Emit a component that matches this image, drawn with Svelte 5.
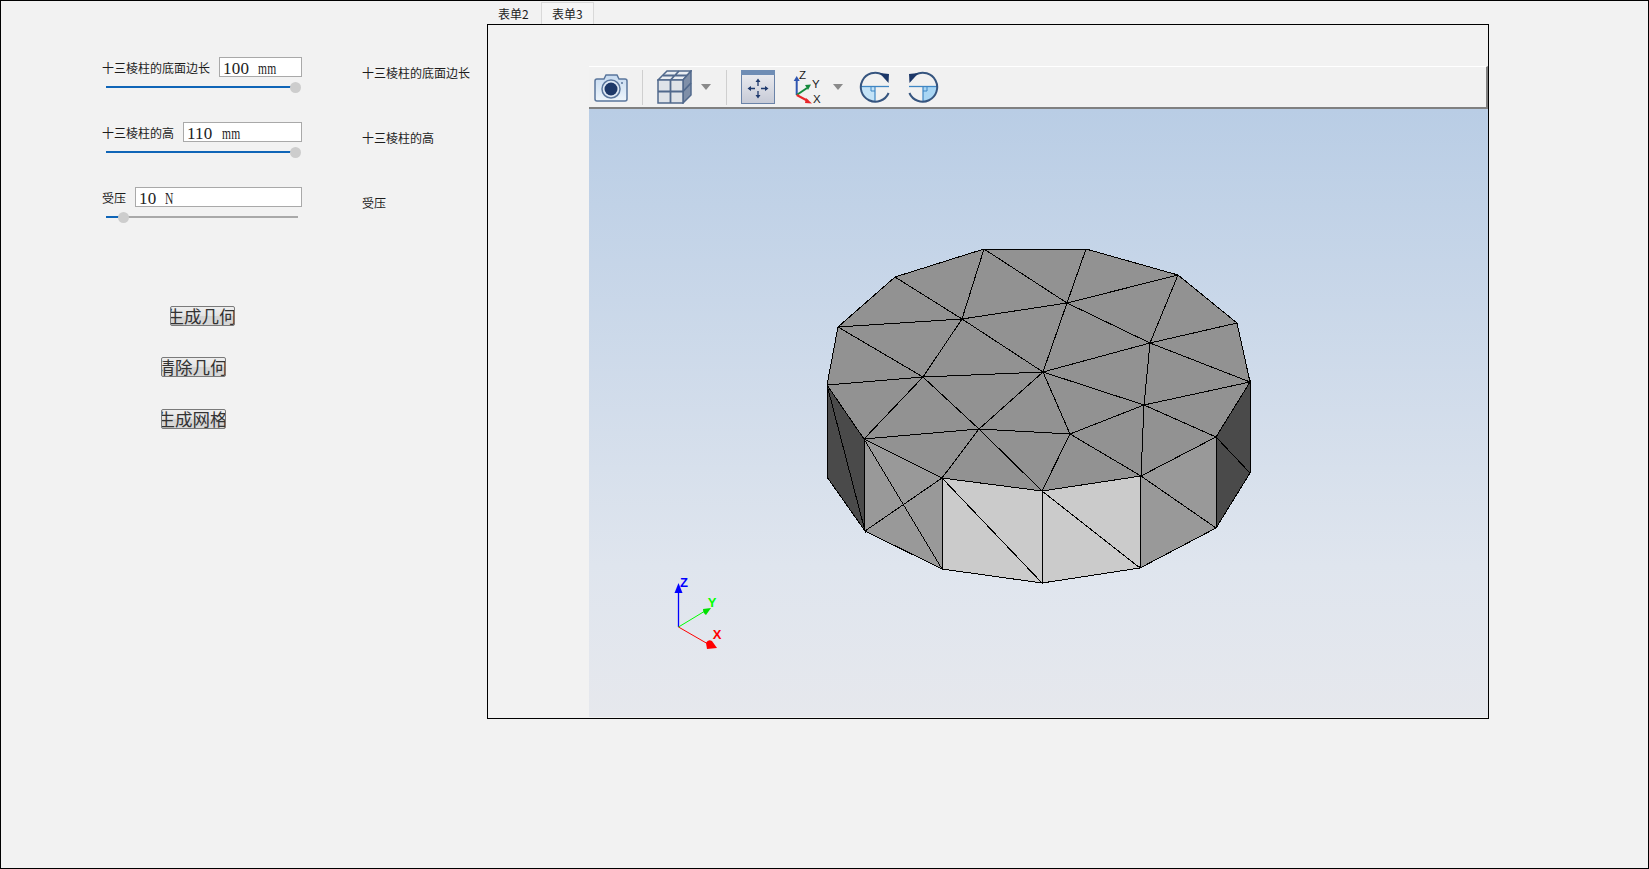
<script>
  const fields = [
    { label: '十三棱柱的底面边长', value: '100', unit: 'mm', pct: 98.7 },
    { label: '十三棱柱的高', value: '110', unit: 'mm', pct: 98.7 },
    { label: '受压', value: '10', unit: 'N', pct: 8.9 }
  ];
  const buttons = [
    { text: '生成几何', cls: 'b1' },
    { text: '清除几何', cls: 'b2' },
    { text: '生成网格', cls: 'b3' }
  ];
  const v = {
    A: [984, 249], B: [895, 277], C: [838, 327], D: [827, 385], E: [962, 319], F: [923, 377],
    G: [1086, 249], H: [1178, 275], I: [1237, 323], J: [1250, 382], K: [1067, 303], L: [1150, 343],
    M: [1043, 372], N: [1144, 405], O: [864, 439], P: [979, 429], Q: [942, 478], R: [1042, 491],
    S: [827, 477], T: [865, 531], U: [942, 569], W: [1070, 434], X: [1216, 437], Y: [1141, 476],
    Z: [1140, 568], AA: [1216, 528], AB: [1250, 473], Vb: [1042, 583]
  };
  const pts = (names) => names.map((n) => v[n].join(',')).join(' ');
  const faces = [
    { p: ['A','G','H','I','J','X','Y','R','Q','O','D','C','B'], c: '#929292' },
    { p: ['D','S','T','O'], c: '#4a4a4a' },
    { p: ['O','T','U','Q'], c: '#999999' },
    { p: ['Q','U','Vb','R'], c: '#cbcbcb' },
    { p: ['R','Vb','Z','Y'], c: '#cbcbcb' },
    { p: ['Y','Z','AA','X'], c: '#999999' },
    { p: ['X','AA','AB','J'], c: '#4a4a4a' }
  ];
  const edges = [
    'A-E','A-K','G-K','K-H','H-L','L-I','L-J','K-E','E-B','E-C','E-F','E-M','C-F','D-F','F-M','F-O','F-P',
    'P-M','P-O','P-W','P-Q','P-R','R-W','W-M','W-N','W-Y','M-N','M-K','M-L','L-N','K-L','N-J','N-X','N-Y',
    'D-T','O-T','O-U','T-Q','Q-Vb','R-Vb','R-Z','Y-Z','Y-AA','X-AA','X-AB'
  ].map((e) => e.split('-'));
</script>

{#snippet rotate(flip)}
  <svg class="rot" width="32" height="32" viewBox="0 0 32 32">
    <g transform={flip ? 'translate(32 0) scale(-1 1)' : ''}>
      <path d="M2 15.5H16V30.5A14.5 14.5 0 0 1 2 15.5Z" fill={flip ? '#a9d6f4' : '#c4e3f7'} />
      <path d="M1.5 15.5H30" stroke="#3f86c4" stroke-width="1.3" fill="none" />
      <path d="M16 15.5V30" stroke="#3f86c4" stroke-width="1.2" fill="none" />
      <path d="M12 15.5V20H16" stroke="#3f86c4" stroke-width="1" fill="none" />
      <path d="M23.5 3.6A14.5 14.5 0 1 0 29.6 22" fill="none" stroke="#36557f" stroke-width="2" />
      <path d="M20.5 2L30 3L29.5 12Z" fill="#1c3768" />
    </g>
  </svg>
{/snippet}

{#snippet caret()}
  <svg class="caret" width="10" height="6" viewBox="0 0 10 6"><path d="M0 0H10L5 6Z" fill="#8a8a8a" /></svg>
{/snippet}

<div class="window">
  <section class="left">
    <div class="form">
      {#each fields as f}
        <div class="group">
          <div class="row">
            <span class="label">{f.label}</span>
            <div class="input"><span>{f.value}</span><span class="unit">{f.unit}</span></div>
          </div>
          <div class="slider">
            <div class="track">
              <div class="fill" style="width:{f.pct}%"></div>
              <div class="thumb" style="left:{f.pct}%"></div>
            </div>
          </div>
        </div>
        <div class="side">{f.label}</div>
      {/each}
    </div>
    <div class="actions">
      {#each buttons as b}
        <button class={b.cls}><span>{b.text}</span></button>
      {/each}
    </div>
  </section>

  <section class="tabs">
    <div class="tabbar">
      <div class="tab">表单2</div>
      <div class="tab active">表单3</div>
    </div>
    <div class="frame">
      <div class="toolbar">
        <svg class="cam" width="34" height="28" viewBox="0 0 34 28">
          <defs>
            <linearGradient id="cg" x1="0" y1="0" x2="0" y2="1"><stop offset="0" stop-color="#c6daf0" /><stop offset="1" stop-color="#eef5fb" /></linearGradient>
          </defs>
          <path d="M3 5H10L12 1H23L25 5H31Q33 5 33 7V25Q33 27 31 27H3Q1 27 1 25V7Q1 5 3 5Z" fill="url(#cg)" stroke="#5a769c" stroke-width="1.5" />
          <circle cx="17" cy="15" r="9" fill="#dfe9f5" stroke="#5a769c" stroke-width="1.5" />
          <circle cx="17" cy="15" r="6.5" fill="#1d3868" />
          <circle cx="28" cy="9" r="1" fill="#5a769c" />
        </svg>
        <i class="sep s1"></i>
        <svg class="cube" width="35" height="34" viewBox="0 0 35 34">
          <path d="M1 10L10 1H34L26 10Z" fill="#e9edf2" stroke="#51698c" stroke-width="1.5" />
          <path d="M26 10L34 1V25L26 33Z" fill="#7f8fa8" stroke="#51698c" stroke-width="1.5" />
          <rect x="1" y="10" width="25" height="23" fill="#dfe3e8" stroke="#51698c" stroke-width="1.5" />
          <path d="M13.5 10V33M1 21.5H26M26 21.5L34 13M6 5.5H30M22 1L13.5 10" stroke="#51698c" stroke-width="1.8" fill="none" />
        </svg>
        {@render caret()}
        <i class="sep s2"></i>
        <svg class="fit" width="34" height="34" viewBox="0 0 34 34">
          <defs>
            <linearGradient id="fg" x1="0" y1="0" x2="0" y2="1"><stop offset="0" stop-color="#eeeef2" /><stop offset="1" stop-color="#c6cad6" /></linearGradient>
          </defs>
          <rect x="0.5" y="0.5" width="33" height="33" fill="url(#fg)" stroke="#6a83a8" />
          <rect x="0" y="0" width="34" height="5" fill="#6f8db5" />
          <path d="M17 10V16M17 21V27M8 18.5H14M20 18.5H26" stroke="#1f3a6e" stroke-width="1.3" />
          <path d="M14.5 12L17 8.5L19.5 12ZM14.5 25L17 28.5L19.5 25ZM10 16L6.5 18.5L10 21ZM24 16L27.5 18.5L24 21Z" fill="#1f3a6e" />
        </svg>
        <svg class="axes" width="28" height="34" viewBox="0 0 28 34">
          <path d="M3.7 25V9" stroke="#2f55b0" stroke-width="2" />
          <path d="M0.7 11L3.7 6L6.7 11Z" fill="#2f55b0" />
          <path d="M3.7 25L14 18" stroke="#158a3c" stroke-width="2" />
          <path d="M12 15L18 14.5L15 20Z" fill="#158a3c" />
          <path d="M3.7 25L15 31" stroke="#e8262a" stroke-width="2" />
          <path d="M13 28L19 33.5L12 33Z" fill="#e8262a" />
          <text x="6" y="8.5" class="ax">Z</text>
          <text x="19" y="17.5" class="ax">Y</text>
          <text x="20" y="33" class="ax">X</text>
        </svg>
        {@render caret()}
        {@render rotate(false)}
        {@render rotate(true)}
      </div>
      <div class="viewer">
        <svg class="scene" width="898" height="607" viewBox="589 109 898 607">
          <g shape-rendering="crispEdges">
            {#each faces as f}
              <polygon points={pts(f.p)} fill={f.c} stroke="#000" stroke-width="1" />
            {/each}
            {#each edges as e}
              <line x1={v[e[0]][0]} y1={v[e[0]][1]} x2={v[e[1]][0]} y2={v[e[1]][1]} stroke="#000" stroke-width="1" />
            {/each}
          </g>
          <path d="M678.5 627V590" stroke="#0000ff" stroke-width="1.3" />
          <path d="M674.5 593L678.5 583L682.5 593Z" fill="#0000ff" />
          <path d="M678.5 627L705 611" stroke="#00ff00" stroke-width="1" />
          <path d="M703 609L711 608L706 615Q703 613 703 609Z" fill="#00e000" />
          <path d="M678.5 627L708 644" stroke="#ff0000" stroke-width="1" />
          <path d="M706 643Q708 639 712 641L717 648L707 649Z" fill="#ff0000" />
          <text x="684" y="587" class="tri" fill="#0000ff">Z</text>
          <text x="712" y="607" class="tri" fill="#00ff00">Y</text>
          <text x="717" y="639" class="tri" fill="#ff0000">X</text>
        </svg>
      </div>
    </div>
  </section>
</div>

<style>
  :global(body) {
    margin: 0;
    background: #f2f2f2;
  }
  .window {
    box-sizing: border-box;
    width: 1649px;
    height: 869px;
    border: 1px solid #000;
    background: #f2f2f2;
    display: flex;
    font-family: "Noto Sans CJK SC", "Noto Sans", sans-serif;
    font-size: 12px;
    color: #1c1c1c;
    overflow: hidden;
  }
  .left {
    width: 486px;
    flex: none;
    box-sizing: border-box;
    padding: 56px 0 0 101px;
  }
  .form {
    display: grid;
    grid-template-columns: 260px 1fr;
    grid-auto-rows: 65px;
  }
  .row {
    display: flex;
    align-items: center;
    gap: 9px;
    width: 200px;
    height: 20px;
  }
  .label, .side {
    line-height: 16px;
    white-space: nowrap;
  }
  .label {
    padding-top: 1px;
  }
  .side {
    margin-top: 8px;
  }
  .input {
    flex: 1;
    box-sizing: border-box;
    height: 20px;
    padding: 1px 0 0 3px;
    border: 1px solid #a9a9a9;
    background: #fff;
    font-family: "Liberation Serif", serif;
    font-size: 17px;
    line-height: 19px;
    letter-spacing: 0.2px;
    color: #222;
    white-space: pre;
    overflow: hidden;
  }
  .unit {
    display: inline-block;
    margin-left: 9px;
    transform: scaleX(0.68);
    transform-origin: left center;
  }
  .slider {
    margin-left: 4px;
    width: 192px;
    height: 20px;
    display: flex;
    align-items: center;
  }
  .track {
    position: relative;
    width: 100%;
    height: 2px;
    background: #a9a9a9;
  }
  .fill {
    height: 100%;
    background: #0f65b7;
  }
  .thumb {
    position: absolute;
    top: -4.5px;
    width: 11px;
    height: 11px;
    margin-left: -5.5px;
    border-radius: 50%;
    background: #cdcdcd;
  }
  .actions {
    display: flex;
    flex-direction: column;
    align-items: flex-start;
    margin-top: 54px;
    gap: 31px;
  }
  button {
    box-sizing: border-box;
    width: 65px;
    height: 20px;
    padding: 0 2px 0 0;
    display: flex;
    justify-content: center;
    align-items: center;
    overflow: hidden;
    border: 1px solid #7a7a7a;
    border-radius: 2px;
    background: linear-gradient(#eeeeee, #e4e4e4 50%, #d4d4d4 50%, #d8d8d8);
    font-family: "Noto Sans CJK SC", sans-serif;
    font-size: 17.5px;
    line-height: 18px;
    color: #333;
  }
  button span {
    flex: none;
    white-space: nowrap;
  }
  .b1 { margin-left: 68px; }
  .b2 { margin-left: 59px; }
  .b3 { margin-left: 59px; margin-top: 1px; }
  .tabs {
    width: 1002px;
    flex: none;
    display: flex;
    flex-direction: column;
    height: 718px;
  }
  .tabbar {
    display: flex;
    height: 23px;
    box-sizing: border-box;
    padding: 1px 0 0 1px;
  }
  .tab {
    box-sizing: border-box;
    width: 53px;
    padding: 3px 0 0 9px;
    line-height: 16px;
    white-space: nowrap;
    border: 1px solid transparent;
    border-bottom: 0;
  }
  .tab.active {
    border-color: #d9d9d9;
    background: #f5f5f5;
    padding-left: 10px;
  }
  .frame {
    flex: 1;
    box-sizing: border-box;
    border: 1px solid #000;
    padding: 41px 0 1px 101px;
    display: flex;
    flex-direction: column;
  }
  .toolbar {
    box-sizing: border-box;
    height: 43px;
    flex: none;
    display: flex;
    align-items: center;
    border-top: 1px solid #fff;
    border-bottom: 2px solid #808080;
    border-right: 2px solid #808080;
    background: #f1f1f1;
  }
  .cam { margin: 1px 0 0 5px; }
  .sep {
    width: 1px;
    height: 35px;
    background: #cfcfcf;
    margin-left: 14px;
  }
  .cube { margin-left: 14px; }
  .caret { margin-left: 9px; }
  .s2 { margin-left: 15px; }
  .fit { margin-left: 14px; }
  .axes { margin-left: 18px; }
  .axes + .caret { margin-left: 12px; }
  .rot { margin-left: 16px; }
  .ax {
    font-family: "Liberation Sans", sans-serif;
    font-size: 11.5px;
    fill: #1a1a1a;
  }
  .viewer {
    flex: 1;
    min-height: 0;
    background: linear-gradient(#b9cde5, #dfe5ee 75%, #e6e8ed);
  }
  .scene {
    display: block;
  }
  .tri {
    font-family: "Liberation Sans", sans-serif;
    font-size: 13px;
    font-weight: 700;
    text-anchor: middle;
  }
</style>
